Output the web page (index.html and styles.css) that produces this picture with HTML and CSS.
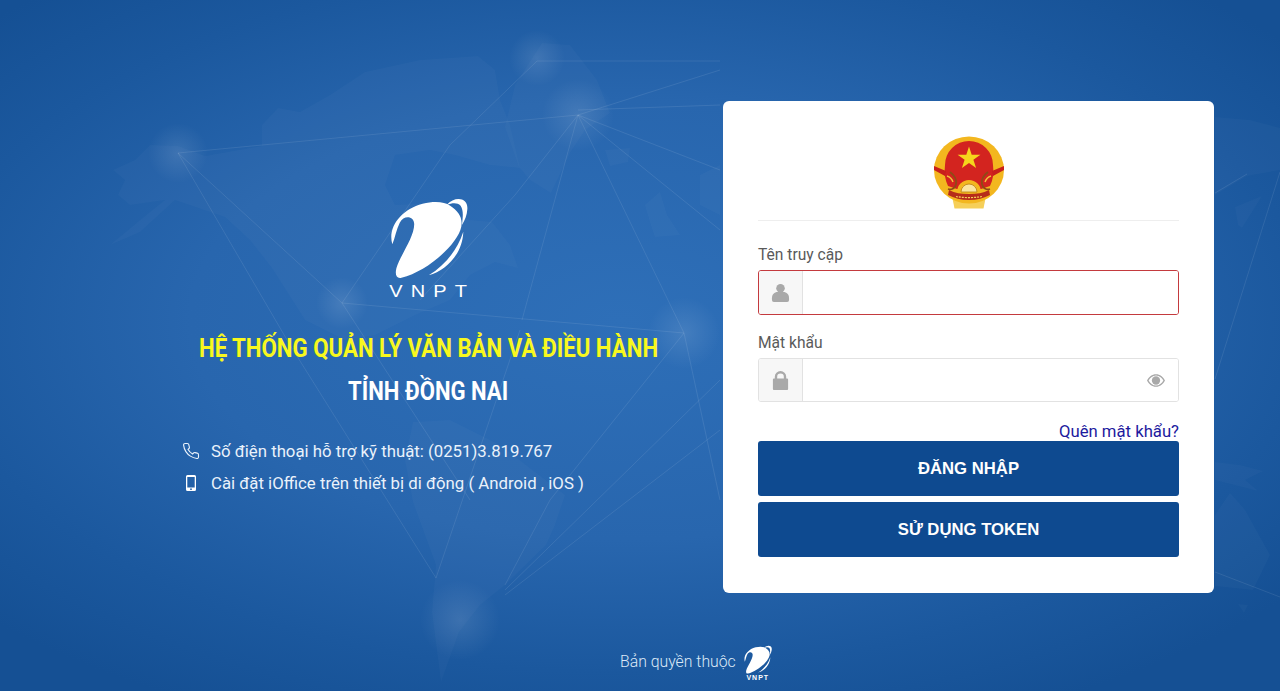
FILE: index.html
```html
<!DOCTYPE html>
<html lang="vi">
<head>
<meta charset="utf-8">
<title>Hệ thống quản lý văn bản và điều hành</title>
<link rel="stylesheet" href="styles.css">
</head>
<body>
<svg class="hidden-defs" width="0" height="0" aria-hidden="true">
  <symbol id="vnpt-mark" viewBox="93 48 232 246" preserveAspectRatio="none">
    <path d="M100 190C85 140 125 85 190 68C225 60 255 62 272 74C295 90 310 108 305 137C296 187 205 272 127 290C113 294 107 281 112 262C122 225 165 170 165 130C165 105 135 100 122 125C112 145 108 170 100 190Z"/>
    <path d="M262 71C285 46 326 48 323 85C322 103 316 118 307 132C310 106 312 88 303 74C293 63 277 66 262 71Z"/>
    <path d="M311 152C309 217 262 268 208 283C255 254 292 210 311 152Z"/>
  </symbol>
</svg>

<svg class="map" viewBox="0 0 1280 691" preserveAspectRatio="none" aria-hidden="true">
  <defs>
    <radialGradient id="glow">
      <stop offset="0" stop-color="#fff" stop-opacity=".11"/>
      <stop offset="1" stop-color="#fff" stop-opacity="0"/>
    </radialGradient>
  </defs>
  <g class="land">
    <path d="M113 170L135 160L150 145L178 146L205 156L262 146L262 125L278 108L300 112L330 95L365 72L420 60L478 56L495 70L500 100L510 125L520 168L490 165L455 155L430 150L395 155L385 185L395 205L430 203L470 220L492 222L510 245L518 268L495 262L470 275L450 300L415 315L375 335L345 340L305 320L272 268L250 240L225 217L175 200L140 232L110 245L150 212L165 200L130 205L118 195L125 180Z"/>
    <path d="M505 127L515 85L542 43L570 45L597 80L610 113L585 130L570 153L551 193L530 180L519 167Z"/>
    <path d="M605 150L630 148L628 162L610 166Z"/>
    <path d="M645 205L660 192L667 215L680 235L655 237L650 222Z"/>
    <path d="M413 422L450 420L500 445L565 495L555 525L546 545L505 585L480 605L459 632L441 682L432 612L436 565L413 502L405 460Z"/>
    <path d="M700 175L720 165L720 215L700 205Z"/>
    <path d="M1215 117L1250 120L1280 128L1280 170L1247 176L1215 195Z"/>
    <path d="M1235 207L1262 196L1242 228L1238 225Z"/>
    <path d="M1215 462L1240 465L1263 471L1245 480L1258 491L1215 480Z"/>
    <path d="M1230 493L1245 510L1270 555L1253 590L1215 586L1215 515Z"/>
    <path d="M1238 604L1248 605L1244 613Z"/>
  </g>
  <g class="links">
    <path d="M178 153L578 115M537 61L720 61M578 115L720 70M578 110L720 105M537 61L450 145L342 303M578 115L515 195L420 300"/>
    <path d="M578 115L720 230M578 115L720 170M578 115L684 333M578 115L522 320"/>
    <path d="M178 153L342 303M178 153L290 345M342 303L684 333M342 303L470 500M290 345L436 578M520 330L436 578M684 333L550 500L505 585"/>
    <path d="M720 380L505 590M720 430L505 595M684 333L720 500M1280 172L1215 379M1215 572L1280 597M1215 193L1247 174"/>
  </g>
  <g class="glows">
    <circle cx="178" cy="153" r="30"/><circle cx="537" cy="58" r="28"/><circle cx="578" cy="115" r="36"/>
    <circle cx="342" cy="303" r="26"/><circle cx="684" cy="333" r="36"/><circle cx="460" cy="620" r="40"/>
  </g>
</svg>

<div class="page">
  <main class="main">
    <section class="intro">
      <div class="brand">
        <svg class="brand-mark"><use href="#vnpt-mark"/></svg>
        <span class="brand-name">VNPT</span>
      </div>
      <h1 class="title">HỆ THỐNG QUẢN LÝ VĂN BẢN VÀ ĐIỀU HÀNH</h1>
      <h2 class="subtitle">TỈNH ĐỒNG NAI</h2>
      <ul class="info">
        <li class="info-item">
          <svg class="info-icon" viewBox="0 0 24 24"><path class="stroke-icon" d="M22 16.92v3a2 2 0 0 1-2.18 2 19.79 19.79 0 0 1-8.63-3.07 19.5 19.5 0 0 1-6-6 19.79 19.79 0 0 1-3.07-8.67A2 2 0 0 1 4.11 2h3a2 2 0 0 1 2 1.72 12.84 12.84 0 0 0 .7 2.81 2 2 0 0 1-.45 2.11L8.09 9.91a16 16 0 0 0 6 6l1.27-1.27a2 2 0 0 1 2.11-.45 12.84 12.84 0 0 0 2.81.7A2 2 0 0 1 22 16.92z"/></svg>
          <span>Số điện thoại hỗ trợ kỹ thuật: (0251)3.819.767</span>
        </li>
        <li class="info-item">
          <svg class="info-icon" viewBox="0 0 18 18"><path class="solid-icon" fill-rule="evenodd" d="M5.5 1h7A1.5 1.5 0 0 1 14 2.5v13a1.5 1.5 0 0 1-1.500 1.500h-7A1.500 1.500 0 0 1 4 15.500v-13A1.500 1.500 0 0 1 5.500 1zM5.300 3v10.500h7.400V3zM9 14.300a.9.9 0 1 0 0 1.800.9.9 0 0 0 0-1.800z"/></svg>
          <span>Cài đặt iOffice trên thiết bị di động ( Android , iOS )</span>
        </li>
      </ul>
    </section>

    <form class="card">
      <div class="emblem-row">
        <svg class="emblem" viewBox="0 0 96 95" aria-label="Quốc huy">
          <path d="M31 71h34l-2.500 12.500H33.500z" fill="#f6cf58"/>
          <ellipse cx="48" cy="45" rx="35" ry="33.500" fill="#f3b71f"/>
          <path d="M24 40a24 24 0 0 1 48 0c1 8 0 15-3 21l-9 3H36l-9-3c-3-6-4-13-3-21z" fill="#d3241f"/>
          <path d="M48 21.500l2.700 8.200h8.700l-7 5.100 2.700 8.300-7.100-5.100-7.100 5.100 2.700-8.300-7-5.100h8.700z" fill="#f6d51c"/>
          <path d="M13 41l12 5-1 5-11-6zM83 41l-12 5 1 5 11-6z" fill="#c8201c"/>
          <path d="M29 47c4 3 7 7 6 12s-5 6-8 5M67 47c-4 3-7 7-6 12s5 6 8 5" fill="none" stroke="#8f4a16" stroke-width="1.800"/>
          <path d="M26 51c3 1 5 3 6 6M70 51c-3 1-5 3-6 6" fill="none" stroke="#f3c23c" stroke-width="1.400"/>
          <path d="M36 67a12 12 0 0 1 24 0z" fill="#f3b71f"/>
          <path d="M40 67a8 8 0 0 1 16 0z" fill="#fbe6a0" stroke="#b87d12" stroke-width=".8"/>
          <path d="M28 65c6 3 12 4 20 4s14-1 20-4l1 5c-6 3-13 5-21 5s-15-2-21-5z" fill="#b62c1a"/>
          <path d="M35 71.500c8 1.500 18 1.500 26 0" fill="none" stroke="#f5d25a" stroke-width="1.200" stroke-dasharray="2 1"/>
        </svg>
      </div>

      <label class="field-label" for="username">Tên truy cập</label>
      <div class="input-group input-group-error">
        <span class="addon">
          <svg class="addon-icon" viewBox="0 0 20 20"><circle cx="10" cy="5.500" r="4.500"/><path d="M1 16c0-4 2.500-6.500 6-6.500h6c3.500 0 6 2.500 6 6.500v2a2 2 0 0 1-2 2H3a2 2 0 0 1-2-2z"/></svg>
        </span>
        <input class="input" id="username" type="text">
      </div>

      <label class="field-label field-label-second" for="password">Mật khẩu</label>
      <div class="input-group input-group-short">
        <span class="addon">
          <svg class="addon-icon" viewBox="0 0 20 20"><path fill-rule="evenodd" d="M4 8V6a6 6 0 0 1 12 0v2h1a1 1 0 0 1 1 1v10a1 1 0 0 1-1 1H3a1 1 0 0 1-1-1V9a1 1 0 0 1 1-1zm2.500 0h7V6a3.500 3.500 0 0 0-7 0z"/></svg>
        </span>
        <input class="input" id="password" type="password">
        <svg class="eye" viewBox="0 0 20 14"><path fill-rule="evenodd" d="M10 0c4.500 0 8 3 10 7-2 4-5.500 7-10 7S2 11 0 7c2-4 5.500-7 10-7zM1.800 7C3.500 10 6.500 12.600 10 12.600S16.500 10 18.200 7C16.500 4 13.500 1.400 10 1.400S3.500 4 1.800 7z"/><circle cx="10" cy="7" r="4.600"/></svg>
      </div>

      <div class="forgot-row"><a class="forgot" href="#">Quên mật khẩu?</a></div>
      <button class="btn" type="button">ĐĂNG NHẬP</button>
      <button class="btn btn-second" type="button">SỬ DỤNG TOKEN</button>
    </form>
  </main>

  <footer class="footer">
    <span class="footer-text">Bản quyền thuộc</span>
    <span class="footer-brand">
      <svg class="footer-mark"><use href="#vnpt-mark"/></svg>
      <span class="footer-name">VNPT</span>
    </span>
  </footer>
</div>
</body>
</html>
```
FILE: styles.css
```css
* { box-sizing: border-box; }

html, body { height: 100%; }

body {
  margin: 0;
  overflow: hidden;
  position: relative;
  font-family: Roboto, "Noto Sans", sans-serif;
  background: radial-gradient(ellipse 860px 440px at 620px 320px, #2e6fb8 0%, #2866ae 50%, #1b589e 80%, #155094 100%);
  background-color: #155094;
}

.hidden-defs { position: absolute; }

.map {
  position: absolute;
  inset: 0;
  width: 100%;
  height: 100%;
}

.land path { fill: #fff; fill-opacity: .025; }
.links path { fill: none; stroke: #fff; stroke-opacity: .09; stroke-width: 1; }
.glows circle { fill: url(#glow); }

.page {
  position: relative;
  display: flex;
  flex-direction: column;
  height: 691px;
}

.main {
  display: flex;
  align-items: flex-start;
  padding: 101px 0 0 133px;
}

/* Left intro */
.intro {
  flex: none;
  width: 590px;
  padding: 96px 0 0 1px;
  display: flex;
  flex-direction: column;
  align-items: center;
  color: #fff;
}

.brand {
  display: flex;
  flex-direction: column;
  align-items: center;
  height: 103px;
}

.brand-mark {
  width: 78px;
  height: 82px;
  fill: #fff;
}

.brand-name {
  margin-top: 4px;
  padding-left: 6px;
  font-family: "Liberation Sans", sans-serif;
  font-size: 16px;
  line-height: 17px;
  letter-spacing: 6.500px;
  transform: scaleX(1.25);
}

.title {
  margin: 31px 0 0;
  font-size: 26px;
  line-height: 34px;
  font-weight: 700;
  color: #f8f81e;
  white-space: nowrap;
  transform: scaleX(.855);
}

.subtitle {
  margin: 9px 0 0;
  font-size: 26px;
  line-height: 34px;
  font-weight: 700;
  color: #fff;
  white-space: nowrap;
  transform: scaleX(.85);
}

.info {
  list-style: none;
  margin: 27px 0 0;
  padding: 0 0 0 48px;
  align-self: stretch;
}

.info-item {
  display: flex;
  align-items: center;
  gap: 11px;
  height: 32px;
  font-size: 16.800px;
  color: #eaf2fb;
}

.info-icon { width: 18px; height: 18px; flex: none; }
.stroke-icon { fill: none; stroke: #eaf2fb; stroke-width: 1.500; }
.solid-icon { fill: #fff; }

/* Card */
.card {
  width: 491px;
  height: 492px;
  padding: 24px 35px 0;
  background: #fff;
  border-radius: 6px;
  display: flex;
  flex-direction: column;
}

.emblem-row {
  display: flex;
  justify-content: center;
  height: 96px;
  border-bottom: 1px solid #eeeeee;
}

.emblem { width: 96px; height: 95px; }

.field-label {
  margin-top: 24px;
  font-size: 15.600px;
  line-height: 20px;
  color: #5a5a5a;
}

.field-label-second { margin-top: 18px; }

.input-group {
  position: relative;
  margin-top: 5px;
  display: flex;
  height: 45px;
  border: 1px solid #e2e2e2;
  border-radius: 3px;
  overflow: hidden;
}

.input-group-short { height: 44px; }

.input-group-error { border-color: #c43a3e; }

.addon {
  width: 44px;
  flex: none;
  display: flex;
  align-items: center;
  justify-content: center;
  background: #f7f7f7;
  border-right: 1px solid #e2e2e2;
}

.addon-icon { width: 19px; height: 19px; fill: #a9a9a9; }

.input {
  flex: 1;
  min-width: 0;
  border: 0;
  outline: 0;
  background: #fff;
  padding: 0 12px;
}

.eye {
  position: absolute;
  right: 13px;
  top: 15px;
  width: 18px;
  height: 13px;
  fill: #a9a9a9;
}

.forgot-row {
  margin-top: 20px;
  height: 19px;
  display: flex;
  justify-content: flex-end;
}

.forgot {
  font-size: 16.700px;
  line-height: 20px;
  color: #1d1a9e;
  text-decoration: none;
}

.btn {
  height: 55px;
  border: 0;
  border-radius: 3px;
  background: #0e4a90;
  color: #fff;
  font-family: "Liberation Sans", sans-serif;
  font-size: 16.700px;
  font-weight: 700;
  padding: 0;
}

.btn-second { margin-top: 6px; }

/* Footer */
.footer {
  margin-top: 52px;
  padding-left: 620px;
  display: flex;
  align-items: center;
  gap: 8px;
  color: #dce9f7;
  font-size: 15.800px;
  font-weight: 300;
}

.footer-text { margin: 0 0 4px; }

.footer-brand {
  display: flex;
  flex-direction: column;
  align-items: center;
  width: 28px;
  height: 37px;
}

.footer-mark { width: 28px; height: 29px; fill: #fff; }

.footer-name {
  font-family: "Liberation Sans", sans-serif;
  font-size: 7px;
  line-height: 8px;
  font-weight: 700;
  letter-spacing: 1px;
  color: #fff;
}
```
